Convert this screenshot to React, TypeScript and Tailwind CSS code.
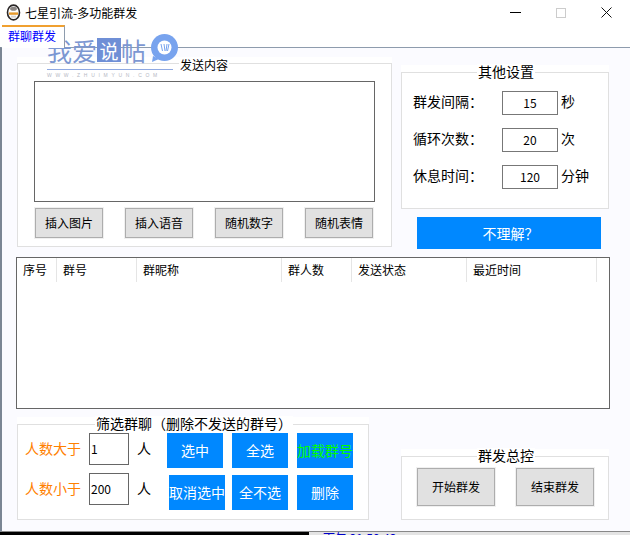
import React from "react";

const FONT = { fontFamily: '"Noto Sans CJK SC", "Liberation Sans", sans-serif' };

function GrayButton({ label, className }: { label: string; className: string }) {
  return (
    <button className={`shrink-0 flex items-center justify-center bg-[#e1e1e1] border border-[#adadad] outline outline-1 outline-[#f0f0f0] text-[12px] text-black ${className}`}>
      {label}
    </button>
  );
}

function BlueButton({ label, className = "" }: { label: string; className?: string }) {
  return (
    <button className={`w-[56px] h-[35px] pb-[2px] shrink-0 flex items-center justify-center bg-[#0088ff] text-[14px] leading-none whitespace-nowrap text-white ${className}`}>
      {label}
    </button>
  );
}

function Legend({ text, className }: { text: string; className: string }) {
  return <span className={`absolute bg-white px-[1px] leading-[15px] whitespace-nowrap text-black ${className}`}>{text}</span>;
}

function SettingRow({ label, value, unit }: { label: string; value: string; unit: string }) {
  return (
    <div className="flex items-center h-[25px]">
      <span className="w-[100px] pl-[11px] pb-[3px] text-[14px] whitespace-nowrap">{label}</span>
      <span className="w-[56px] h-[24px] border border-[#777777] flex items-center justify-center text-[12px]">{value}</span>
      <span className="ml-[3px] pb-[2px] text-[14px] whitespace-nowrap">{unit}</span>
    </div>
  );
}

function FilterInput({ value }: { value: string }) {
  return <span className="w-[40px] h-[32px] shrink-0 border border-[#666666] flex items-center pl-[1px] text-[12px] bg-white">{value}</span>;
}

const columns = [
  { label: "序号", w: "w-[40px]" },
  { label: "群号", w: "w-[80px]" },
  { label: "群昵称", w: "w-[145px]" },
  { label: "群人数", w: "w-[70px]" },
  { label: "发送状态", w: "w-[115px]" },
  { label: "最近时间", w: "w-[130px]" },
];

export default function App() {
  return (
    <div className="relative w-[630px] h-[535px] overflow-hidden bg-white text-black flex flex-col" style={FONT}>
      <div className="h-[25px] shrink-0 flex items-center pl-[6px] relative">
        <svg width="15" height="17" viewBox="0 0 15 17" className="shrink-0">
          <ellipse cx="7.5" cy="8.5" rx="6" ry="7.4" fill="#ffffff" stroke="#2a2626" strokeWidth="1.6" />
          <ellipse cx="7.5" cy="4.8" rx="3.4" ry="2" fill="#8a8583" />
          <rect x="3" y="8.4" width="9" height="2.4" fill="#e79a2c" />
          <rect x="5" y="11.6" width="5" height="2" fill="#d8d2cc" />
        </svg>
        <span className="ml-[4px] text-[12px] leading-none whitespace-nowrap">七星引流-多功能群发</span>
        <div className="ml-auto flex items-center h-full">
          <span className="w-[11px] h-px bg-black mr-[35px]"></span>
          <span className="w-[10px] h-[10px] border border-[#cccccc] mr-[35px]"></span>
          <svg width="11" height="11" viewBox="0 0 11 11" className="mr-[18px]">
            <path d="M0.5 0.5 L10.5 10.5 M10.5 0.5 L0.5 10.5" stroke="#111" strokeWidth="1" fill="none" />
          </svg>
        </div>
      </div>

      <div className="h-[22px] shrink-0 flex items-end">
        <div className="ml-[2px] w-[63px] h-[23px] -mb-px relative z-10 bg-white border-t-2 border-t-[#f0a030] border-r border-r-[#8e9cad] pl-[6px] text-[12px] leading-[17px] text-[#0000ff] whitespace-nowrap">
          群聊群发
        </div>
      </div>

      <div className="flex-1 min-h-0 bg-[#fbfbff] border-t border-t-[#8e9cad] border-l-2 border-l-[#7b8694] border-b border-b-[#888888] pl-[14px] flex flex-col">
        <div className="flex mt-[9px]">
          <div className="relative ml-[1px] w-[375px] h-[190px] bg-white pt-[6px]">
            <Legend text="发送内容" className="top-0 left-[162px] text-[12px]" />
            <div className="h-full border border-[#e0e0e0] pt-[17px] pl-[16px]">
              <div className="w-[341px] h-[121px] border border-[#666666] bg-white"></div>
              <div className="flex mt-[6px] ml-[1px] gap-[22px]">
                <GrayButton label="插入图片" className="w-[68px] h-[30px]" />
                <GrayButton label="插入语音" className="w-[68px] h-[30px]" />
                <GrayButton label="随机数字" className="w-[68px] h-[30px]" />
                <GrayButton label="随机表情" className="w-[68px] h-[30px]" />
              </div>
            </div>
          </div>

          <div className="ml-[9px] pt-[8px] flex flex-col">
            <div className="relative w-[208px] h-[144px] bg-white pt-[7px]">
              <Legend text="其他设置" className="-top-px left-[76px] text-[14px]" />
              <div className="h-full border border-[#e0e0e0] pt-[17px] flex flex-col gap-[12px]">
                <SettingRow label="群发间隔：" value="15" unit="秒" />
                <SettingRow label="循环次数：" value="20" unit="次" />
                <SettingRow label="休息时间：" value="120" unit="分钟" />
              </div>
            </div>
            <button className="ml-[16px] mt-[8px] w-[184px] h-[32px] pl-[3px] bg-[#0088ff] text-white text-[14px] flex items-center justify-center">不理解？</button>
          </div>
        </div>

        <div className="mt-[8px] w-[594px] h-[152px] shrink-0 border border-[#666666] bg-white">
          <div className="flex h-[24px]">
            {columns.map((c) => (
              <div key={c.label} className={`${c.w} shrink-0 pl-[6px] border-r border-r-[#e5e5e5] text-[12px] leading-[24px] whitespace-nowrap`}>
                {c.label}
              </div>
            ))}
          </div>
        </div>

        <div className="flex items-end mt-[8px]">
          <div className="relative ml-[1px] w-[352px] h-[103px] bg-white pt-[7px]">
            <Legend text="筛选群聊（删除不发送的群号）" className="-top-px left-[78px] text-[14px]" />
            <div className="h-full border border-[#e0e0e0] pl-[7px] pt-[8px]">
              <div className="flex items-start">
                <div className="w-[64px] h-[32px] pb-[2px] flex items-center text-[14px] text-[#ff8000] whitespace-nowrap">人数大于</div>
                <FilterInput value="1" />
                <span className="w-[38px] pl-[8px] pb-[2px] h-[32px] flex items-center text-[14px]">人</span>
                <div className="flex gap-[9px]">
                  <BlueButton label="选中" />
                  <BlueButton label="全选" />
                  <BlueButton label="加载群号" className="!text-[#00ff00]" />
                </div>
              </div>
              <div className="flex items-start mt-[5px]">
                <div className="w-[64px] h-[32px] pb-[2px] flex items-center text-[14px] text-[#ff8000] whitespace-nowrap">人数小于</div>
                <FilterInput value="200" />
                <span className="w-[38px] pl-[8px] pb-[2px] h-[32px] flex items-center text-[14px]">人</span>
                <div className="flex gap-[9px] mt-[2px]">
                  <BlueButton label="取消选中" className="ml-[2px] mr-[-2px]" />
                  <BlueButton label="全不选" />
                  <BlueButton label="删除" />
                </div>
              </div>
            </div>
          </div>

          <div className="relative ml-[32px] w-[208px] h-[71px] bg-white pt-[7px]">
            <Legend text="群发总控" className="-top-px left-[76px] text-[14px]" />
            <div className="h-full border border-[#e0e0e0] pt-[11px] pl-[15px] flex gap-[21px]">
              <GrayButton label="开始群发" className="w-[78px] h-[38px]" />
              <GrayButton label="结束群发" className="w-[78px] h-[38px]" />
            </div>
          </div>
        </div>
      </div>

      <div className="h-[3px] shrink-0 flex overflow-hidden">
        <div className="w-[309px] bg-black"></div>
        <div className="flex-1 bg-[#e4e4e4] pl-[14px] text-[12px] leading-[12px] text-[#0000c8] whitespace-nowrap">下午 21:50:43</div>
      </div>

      <div className="absolute left-[47px] top-[35px] w-[136px] h-[46px] pointer-events-none">
        <div className="flex items-center h-[30px] text-[25px] leading-none text-[#7c97d2] whitespace-nowrap">
          <span>我爱</span>
          <span className="bg-[#6f8fd6] text-white w-[24px] h-[24px] flex items-center justify-center text-[19px]">说</span>
          <span>帖</span>
          <svg width="29" height="29" viewBox="0 0 29 29" className="ml-[4px] -mt-[3px] shrink-0">
            <circle cx="14.5" cy="13.5" r="13.5" fill="#78a3ee" />
            <path d="M3 22 L2 28 L9 25 Z" fill="#78a3ee" />
            <circle cx="14.5" cy="13.5" r="7" fill="#ffffff" />
            <path d="M11 10 L12.5 17 M14 10 L15 17 M17 10 L16 17 M19 10 L17.5 17" stroke="#78a3ee" strokeWidth="1" fill="none" />
          </svg>
        </div>
        <div className="h-px mt-[4px] w-[126px] bg-[#8fa9e2]"></div>
        <div className="mt-[2px] text-[5px] leading-[6px] tracking-[3.7px] text-[#b4b8c4] whitespace-nowrap" style={{ fontFamily: '"Liberation Sans", sans-serif' }}>WWW.ZHUIMYUN.COM</div>
      </div>
    </div>
  );
}
